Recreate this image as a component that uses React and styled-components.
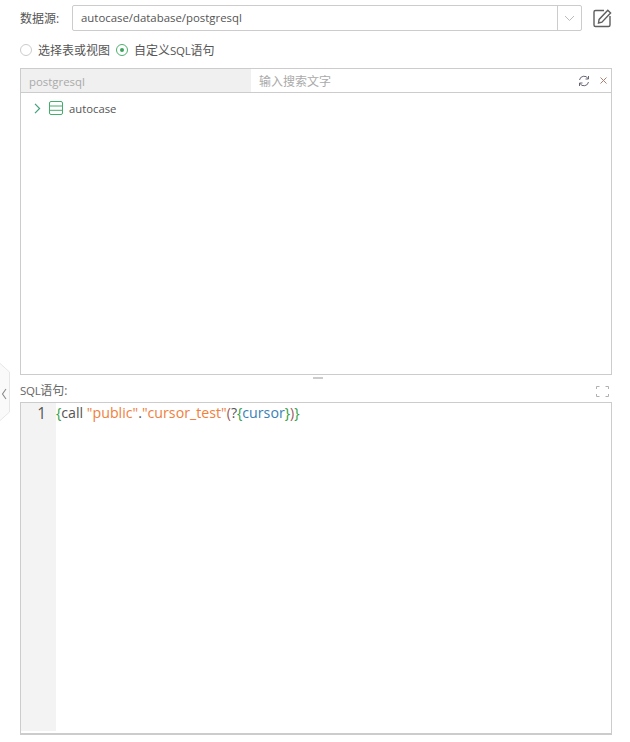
import React from "react";
import styled, { createGlobalStyle } from "styled-components";

const Global = createGlobalStyle`
  html, body { margin: 0; padding: 0; background: #fff; }
  body { font-family: "Open Sans", "Noto Sans CJK SC", sans-serif; font-size: 12px; color: #555; }
`;

const Page = styled.div`
  position: relative;
  width: 630px;
  height: 742px;
  box-sizing: border-box;
  padding: 5px 18px 0 20px;
  overflow: hidden;
`;

const SourceRow = styled.div`
  display: flex;
  align-items: center;
  height: 26px;
`;

const SourceLabel = styled.label`
  width: 52px;
  flex: none;
  color: #555;
`;

const Select = styled.div`
  width: 510px;
  height: 26px;
  flex: none;
  box-sizing: border-box;
  display: flex;
  align-items: stretch;
  border: 1px solid #ccc;
  border-radius: 2px;
`;

const SelectValue = styled.div`
  flex: 1;
  padding-left: 8px;
  line-height: 24px;
  font-size: 11.4px;
  color: #555;
`;

const SelectArrow = styled.div`
  width: 23px;
  border-left: 1px solid #ccc;
  display: flex;
  align-items: center;
  justify-content: center;
`;

const EditButton = styled.div`
  display: flex;
  margin-left: 10px;
`;

const RadioRow = styled.div`
  display: flex;
  align-items: center;
  height: 20px;
  margin-top: 9px;
  gap: 6px;
`;

const RadioItem = styled.div`
  display: flex;
  align-items: center;
  gap: 6px;
  color: #555;
`;

const Latin = styled.span`
  font-size: 11.5px;
  letter-spacing: -0.3px;
`;

const RadioDot = styled.span`
  width: 12px;
  height: 12px;
  box-sizing: border-box;
  border-radius: 50%;
  border: 1px solid ${(p) => (p.$on ? "#4caf6e" : "#ccc")};
  display: flex;
  align-items: center;
  justify-content: center;
  &::after {
    content: "";
    width: 4px;
    height: 4px;
    border-radius: 50%;
    background: ${(p) => (p.$on ? "#3fa35f" : "transparent")};
  }
`;

const TreePanel = styled.div`
  margin-top: 8px;
  width: 592px;
  height: 307px;
  box-sizing: border-box;
  border: 1px solid #ccc;
`;

const TreeHeader = styled.div`
  display: flex;
  height: 24px;
  box-sizing: border-box;
  border-bottom: 1px solid #ccc;
`;

const SchemaName = styled.div`
  width: 230px;
  padding-left: 8px;
  box-sizing: border-box;
  background: #f0f0f0;
  color: #aaa;
  font-size: 11.4px;
  line-height: 25px;
`;

const SearchBox = styled.div`
  flex: 1;
  display: flex;
  align-items: center;
  padding: 0 4px 0 8px;
`;

const SearchHint = styled.span`
  flex: 1;
  color: #aaa;
`;

const SearchTools = styled.div`
  display: flex;
  align-items: center;
  gap: 10px;
`;

const TreeNode = styled.div`
  display: flex;
  align-items: center;
  height: 16px;
  margin-top: 7px;
  padding-left: 13px;
`;

const NodeArrow = styled.span`
  display: flex;
  width: 15px;
`;

const NodeLabel = styled.span`
  margin-left: 6px;
  color: #555;
  font-size: 11.3px;
`;

const Splitter = styled.div`
  display: flex;
  justify-content: center;
  height: 7px;
  width: 596px;
  padding-top: 2px;
  box-sizing: border-box;
`;

const SplitterGrip = styled.span`
  width: 10px;
  height: 2px;
  background: #ccc;
`;

const SqlHeader = styled.div`
  display: flex;
  align-items: flex-start;
  justify-content: space-between;
  width: 592px;
  height: 20px;
  line-height: 18px;
  color: #666;
  padding: 0 3px 0 0;
  box-sizing: border-box;
`;

const ExpandIcon = styled.svg`
  margin-top: 4px;
`;

const Editor = styled.div`
  width: 592px;
  height: 333px;
  box-sizing: border-box;
  display: flex;
  border: 1px solid #ccc;
  border-bottom-width: 2px;
  padding-bottom: 2px;
`;

const Gutter = styled.div`
  width: 35px;
  flex: none;
  box-sizing: border-box;
  background: #f3f3f3;
  color: #555;
  text-align: right;
  padding: 0 10px 0 0;
  font-size: 15.5px;
  line-height: 20px;
`;

const Code = styled.div`
  font-size: 14.2px;
  line-height: 20px;
  color: #555;
  white-space: pre;
`;

const Token = styled.span`
  color: ${(p) => p.$c};
`;

const SideHandle = styled.svg`
  position: absolute;
  left: 0;
  top: 362px;
`;

export default function App() {
  return (
    <Page>
      <Global />
      <SideHandle width="11" height="62" viewBox="0 0 11 62">
        <path d="M-1 .5 9.5 10v40L-1 59.5z" fill="#fafafa" stroke="#e6e6e6" />
        <path d="M6 27 2.5 32 6 37" fill="none" stroke="#8a8a8a" strokeWidth="1.1" />
      </SideHandle>
      <SourceRow>
        <SourceLabel>数据源:</SourceLabel>
        <Select>
          <SelectValue>autocase/database/postgresql</SelectValue>
          <SelectArrow>
            <svg width="11" height="7" viewBox="0 0 11 7" fill="none" stroke="#bbb" strokeWidth="1">
              <path d="M1 1l4.5 4.5L10 1" />
            </svg>
          </SelectArrow>
        </Select>
        <EditButton>
          <svg width="20" height="20" viewBox="0 0 20 20" fill="none" stroke="#5f5f5f" strokeWidth="1.4">
            <path d="M12 2.5H3.5A1.5 1.5 0 0 0 2 4v13a1.5 1.5 0 0 0 1.5 1.5h13A1.5 1.5 0 0 0 18 17V8" />
            <path d="M6.5 15l.6-3.6L15.8 2.2 18.6 5l-8.7 9.2z" />
          </svg>
        </EditButton>
      </SourceRow>
      <RadioRow>
        <RadioItem><RadioDot />选择表或视图</RadioItem>
        <RadioItem><RadioDot $on /><span>自定义<Latin>SQL</Latin>语句</span></RadioItem>
      </RadioRow>
      <TreePanel>
        <TreeHeader>
          <SchemaName>postgresql</SchemaName>
          <SearchBox>
            <SearchHint>输入搜索文字</SearchHint>
            <SearchTools>
              <svg width="12" height="12" viewBox="0 0 12 12" fill="none" stroke="#667" strokeWidth="1">
                <path d="M1.5 5A4.6 4.6 0 0 1 10 3.5M10.5 7A4.6 4.6 0 0 1 2 8.5" />
                <path d="M10.5 1v3H7.5M1.5 11V8h3" />
              </svg>
              <svg width="7" height="7" viewBox="0 0 7 7" fill="none" stroke="#b0806f" strokeWidth="1">
                <path d="M.5.5l6 6M6.5.5l-6 6" />
              </svg>
            </SearchTools>
          </SearchBox>
        </TreeHeader>
        <TreeNode>
          <NodeArrow>
            <svg width="7" height="11" viewBox="0 0 7 11" fill="none" stroke="#3fa37a" strokeWidth="1.2">
              <path d="M1 .8l4.6 4.7L1 10.2" />
            </svg>
          </NodeArrow>
          <svg width="14" height="14" viewBox="0 0 14 14" fill="none" stroke="#45ad6c" strokeWidth="1">
            <rect x=".5" y=".5" width="13" height="13" rx="1.5" />
            <path d="M.5 5h13M.5 9.3h13" />
          </svg>
          <NodeLabel>autocase</NodeLabel>
        </TreeNode>
      </TreePanel>
      <Splitter><SplitterGrip /></Splitter>
      <SqlHeader>
        <span><Latin>SQL</Latin>语句:</span>
        <ExpandIcon width="13" height="11" viewBox="0 0 13 11" fill="none" stroke="#b0b0b0" strokeWidth="1">
          <path d="M.5 3V.5h3M9.5.5h3V3M.5 8v2.5h3M9.5 10.5h3V8" />
        </ExpandIcon>
      </SqlHeader>
      <Editor>
        <Gutter>1</Gutter>
        <Code>
          <Token $c="#2e9e3f">{"{"}</Token>call <Token $c="#f0803c">"public"</Token>.<Token $c="#f0803c">"cursor_test"</Token><Token $c="#a05a5a">(</Token>?<Token $c="#2e9e3f">{"{"}</Token><Token $c="#3b7fb8">cursor</Token><Token $c="#2e9e3f">{"}"}</Token><Token $c="#a05a5a">)</Token><Token $c="#2e9e3f">{"}"}</Token>
        </Code>
      </Editor>
    </Page>
  );
}
